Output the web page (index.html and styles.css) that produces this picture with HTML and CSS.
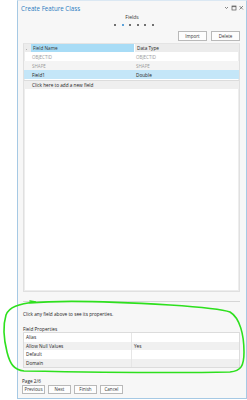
FILE: index.html
```html
<!DOCTYPE html>
<html>
<head>
<meta charset="utf-8">
<link rel="stylesheet" href="styles.css">
</head>
<body>
<div class="panel">
  <div class="titlebar">
    <span class="title">Create Feature Class</span>
    <span class="winctl">
      <svg width="20" height="6" viewBox="0 0 20 6">
        <path d="M1 2 L2.5 3.5 L4 2" fill="none" stroke="#555" stroke-width="0.7"/>
        <rect x="8" y="1" width="4" height="4" fill="none" stroke="#555" stroke-width="0.7"/>
        <line x1="8" y1="1.6" x2="12" y2="1.6" stroke="#555" stroke-width="0.8"/>
        <path d="M15.5 1 L19 4.5 M19 1 L15.5 4.5" stroke="#555" stroke-width="0.7"/>
      </svg>
    </span>
  </div>
  <div class="steptitle">Fields</div>
  <div class="dots">
    <span class="dot"></span><span class="dot active"></span><span class="dot"></span><span class="dot"></span><span class="dot"></span><span class="dot"></span>
  </div>
  <div class="toolbar">
    <button class="btn">Import</button>
    <button class="btn">Delete</button>
  </div>
  <div class="grid">
    <div class="row header">
      <div class="cell corner"><span class="sorter"></span></div>
      <div class="cell c1 sel">Field Name</div>
      <div class="cell c2">Data Type</div>
    </div>
    <div class="row ro">
      <div class="cell corner"></div>
      <div class="cell c1">OBJECTID</div>
      <div class="cell c2">OBJECTID</div>
    </div>
    <div class="row ro alt">
      <div class="cell corner"></div>
      <div class="cell c1">SHAPE</div>
      <div class="cell c2">SHAPE</div>
    </div>
    <div class="row selected">
      <div class="cell corner"></div>
      <div class="cell c1">Field1</div>
      <div class="cell c2">Double</div>
    </div>
    <div class="row addrow">
      <div class="cell corner"></div>
      <div class="cell">Click here to add a new field</div>
    </div>
  </div>
  <div class="divider"></div>
  <div class="hint">Click any field above to see its properties.</div>
  <div class="proplabel">Field Properties</div>
  <div class="props">
    <div class="prow"><div class="pk">Alias</div><div class="pv"></div></div>
    <div class="prow alt"><div class="pk">Allow Null Values</div><div class="pv">Yes</div></div>
    <div class="prow"><div class="pk">Default</div><div class="pv"></div></div>
    <div class="prow alt"><div class="pk">Domain</div><div class="pv"></div></div>
  </div>
  <div class="pageinfo">Page 2/6</div>
  <div class="navbar">
    <button class="btn nav">Previous</button>
    <button class="btn nav">Next</button>
    <button class="btn nav">Finish</button>
    <button class="btn nav">Cancel</button>
  </div>
</div>
<svg class="annot" width="247" height="400" viewBox="0 0 247 400">
  <path d="M30 303 C 60 300, 120 302, 170 305 C 200 307, 222 309, 230 312 C 240 318, 244 335, 244 352 C 244 366, 241 371, 230 372 C 180 373, 80 372, 24 371 C 14 370, 10 364, 7 352 C 4 340, 3 325, 6 315 C 9 307, 18 304, 36 302 L 30 301" fill="none" stroke="#2ee01e" stroke-width="1.6" stroke-linecap="round"/>
</svg>
</body>
</html>
```

FILE: styles.css
```css
* { box-sizing: border-box; }
html, body { margin: 0; padding: 0; background: #ffffff; }
body {
  font-family: "Open Sans", "Liberation Sans", sans-serif;
  font-size: 4.7px;
  color: #222;
  width: 247px;
  height: 400px;
  overflow: hidden;
  position: relative;
}
.panel {
  margin-left: 17px;
  width: 230px;
  height: 399px;
  border: 1px solid #a6c9e4;
  border-top-color: #dbe8f3;
  background: #f7f7f7;
  display: flex;
  flex-direction: column;
}
.titlebar {
  height: 13px;
  display: flex;
  align-items: center;
  justify-content: space-between;
  padding: 1px 2px 0 3px;
}
.title {
  font-size: 6.2px;
  color: #2b7bc0;
}
.winctl { display: flex; align-items: center; }
.steptitle {
  text-align: center;
  font-size: 5px;
  height: 8px;
  line-height: 6px;
  color: #333;
}
.dots {
  display: flex;
  justify-content: center;
  gap: 5.6px;
  height: 6px;
  align-items: center;
  margin-left: 4px;
}
.dot {
  width: 2px;
  height: 2px;
  border-radius: 50%;
  background: #444;
}
.dot.active { background: #2a86d1; }
.toolbar {
  display: flex;
  justify-content: flex-end;
  gap: 4px;
  padding: 3px 6px 0 0;
  height: 13px;
}
.btn {
  font-family: inherit;
  font-size: 4.5px;
  color: #333;
  background: #fdfdfd;
  border: 1px solid #b9b9b9;
  width: 29px;
  height: 10px;
  padding: 0;
  margin: 0;
  line-height: 8px;
}
.grid {
  margin: 2px 6px 0 5px;
  height: 249px;
  border: 1px solid #e0e0e0;
  border-top-color: #e4e4e4;
  background: #ffffff;
  box-shadow: inset 1px 0 0 #ededed, inset -1px 0 0 #ededed, inset 0 -1px 0 #ededed;
}
.row {
  display: flex;
  height: 9px;
  align-items: center;
}
.cell {
  height: 100%;
  display: flex;
  align-items: center;
  padding-left: 1px;
  white-space: nowrap;
}
.corner { width: 7px; padding: 0; position: relative; }
.sorter {
  position: absolute;
  left: 2px;
  bottom: 2px;
  width: 0;
  height: 0;
  border-left: 1.5px solid transparent;
  border-bottom: 1.5px solid #777;
}
.c1 { width: 103px; }
.c2 { flex: 1; }
.header { background: #ececec; height: 8px; }
.header .sel { background: #a8dcf6; color: #333; padding-left: 2px; }
.header .c2 { padding-left: 2px; border-left: 1px solid #ffffff; }
.row.ro { color: #9a9a9a; font-size: 4.5px; }
.row.ro .c1 { padding-left: 1px; }
.row.ro .c2 { padding-left: 2px; }
.row.alt { background: #f4f4f4; }
.row.selected { background: #c4e6f8; color: #222; }
.row.selected .c2 { padding-left: 2px; }
.row.addrow {
  background: #efefef;
  border-top: 1px solid #dcdcdc;
  margin-top: 1px;
  height: 9px;
}
.divider {
  margin: 9px 6px 0 5px;
  height: 1px;
  background: #d6d6d6;
}
.hint {
  margin: 9px 0 0 5px;
  height: 7px;
  line-height: 7px;
}
.proplabel {
  margin: 8px 0 0 5px;
  height: 6px;
  line-height: 6px;
}
.props {
  margin: 0 6px 0 5px;
  border: 1px solid #dcdcdc;
  background: #fff;
}
.prow {
  display: flex;
  height: 8.5px;
  align-items: center;
}
.prow.alt { background: #f0f0f0; }
.pk { width: 108px; padding-left: 2px; border-right: 1px solid #e6e6e6; height: 100%; display: flex; align-items: center; }
.pv { flex: 1; padding-left: 2px; }
.pageinfo {
  margin: 10px 0 0 4px;
  height: 6px;
  line-height: 6px;
}
.navbar {
  display: flex;
  gap: 3px;
  padding: 1px 0 0 4px;
}
.btn.nav { width: 23px; height: 9px; line-height: 7px; }
.annot {
  position: absolute;
  left: 0;
  top: 0;
  pointer-events: none;
}
```
